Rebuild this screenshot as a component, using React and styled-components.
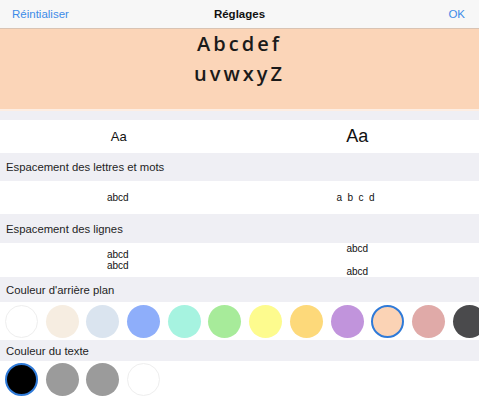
import React from "react";
import styled, { createGlobalStyle } from "styled-components";

const Global = createGlobalStyle`
  html, body { margin: 0; padding: 0; background: #efeff4; }
  body { font-family: "Liberation Sans", Arial, sans-serif; color: #111; }
`;

const Page = styled.div`
  width: 479px;
  height: 398px;
  overflow: hidden;
  display: flex;
  flex-direction: column;
  background: #efeff4;
`;

const NavBar = styled.div`
  height: 28px;
  flex: none;
  display: flex;
  align-items: center;
  justify-content: space-between;
  padding: 0 14px 0 12px;
  background: #f7f7f7;
  border-bottom: 1px solid #d9c3b3;
  position: relative;
  font-size: 11.5px;
`;

const NavButton = styled.span`
  color: #3d8be8;
`;

const NavTitle = styled.span`
  position: absolute;
  left: 0;
  right: 0;
  text-align: center;
  font-weight: bold;
  color: #111;
  pointer-events: none;
`;

const Preview = styled.div`
  height: 80px;
  flex: none;
  background: #fbd5b8;
  border-bottom: 2px solid #fdeee3;
  display: flex;
  flex-direction: column;
  align-items: center;
  justify-content: flex-start;
  font-family: "Open Sans", "Noto Sans", sans-serif;
  font-weight: 600;
  font-size: 20px;
  line-height: 30px;
  letter-spacing: 3px;
  color: #1a1a1a;
  padding-top: 0;
`;

const Gap = styled.div`
  height: ${(p) => p.h}px;
  flex: none;
`;

const Row = styled.div`
  height: ${(p) => p.h}px;
  flex: none;
  background: #fff;
  display: grid;
  grid-template-columns: 1fr 1fr;
  align-items: center;
`;

const Cell = styled.div`
  display: flex;
  flex-direction: column;
  align-items: center;
  justify-content: ${(p) => (p.spread ? "space-between" : "center")};
  height: 100%;
  box-sizing: border-box;
  margin-left: ${(p) => p.shift || 0}px;
  font-size: ${(p) => p.size}px;
  line-height: ${(p) => p.lh || "normal"};
  letter-spacing: ${(p) => p.ls || 0}px;
  color: #111;
`;

const Header = styled.div`
  height: ${(p) => p.h}px;
  flex: none;
  display: flex;
  align-items: center;
  padding-left: 6px;
  font-size: 11.3px;
  color: #1e1e1e;
`;

const Swatches = styled.div`
  height: ${(p) => p.h}px;
  flex: none;
  background: #fff;
  display: flex;
  align-items: center;
  gap: 7.7px;
  padding-left: 5px;
  overflow: hidden;
`;

const Swatch = styled.div`
  width: 33px;
  height: 33px;
  flex: none;
  border-radius: 50%;
  background: ${(p) => p.c};
  box-sizing: border-box;
  border: ${(p) =>
    p.selected ? "2px solid #2f7ad8" : p.light ? "1px solid #eeeeee" : "none"};
`;

const bgColors = [
  "#ffffff", "#f6ede1", "#dae4ef", "#8eaefa", "#a6f3e0", "#a7eb9a",
  "#fdfb8e", "#fdd97a", "#c194dc", "#fbd3b5", "#e0aaa8", "#4a4a4c",
];
const textColors = ["#000000", "#9b9b9b", "#9b9b9b", "#ffffff"];

export default function App() {
  return (
    <>
      <Global />
      <Page>
        <NavBar>
          <NavButton>Réintialiser</NavButton>
          <NavTitle>Réglages</NavTitle>
          <NavButton>OK</NavButton>
        </NavBar>
        <Preview>
          <div>Abcdef</div>
          <div>uvwxyZ</div>
        </Preview>
        <Gap h={9} />
        <Row h={33}>
          <Cell size={13} shift={-2}>Aa</Cell>
          <Cell size={18} shift={-4}>Aa</Cell>
        </Row>
        <Header h={28}>Espacement des lettres et mots</Header>
        <Row h={33}>
          <Cell size={10} shift={-4}>abcd</Cell>
          <Cell size={10} ls={5.5} shift={-2}>abcd</Cell>
        </Row>
        <Header h={29}>Espacement des lignes</Header>
        <Row h={34}>
          <Cell size={10} lh="11px" shift={-4}>
            <span>abcd</span>
            <span>abcd</span>
          </Cell>
          <Cell size={10} lh="11px" shift={-4} spread>
            <span>abcd</span>
            <span>abcd</span>
          </Cell>
        </Row>
        <Header h={25}>Couleur d'arrière plan</Header>
        <Swatches h={38}>
          {bgColors.map((c, i) => (
            <Swatch key={i} c={c} light={i === 0} selected={i === 9} />
          ))}
        </Swatches>
        <Header h={21}>Couleur du texte</Header>
        <Swatches h={37}>
          {textColors.map((c, i) => (
            <Swatch key={i} c={c} light={i === 3} selected={i === 0} />
          ))}
        </Swatches>
      </Page>
    </>
  );
}
